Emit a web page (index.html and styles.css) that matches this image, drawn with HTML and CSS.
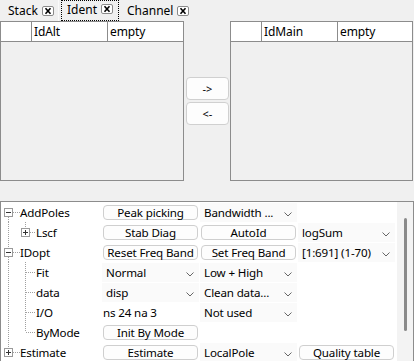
FILE: index.html
```html
<!DOCTYPE html>
<html>
<head>
<meta charset="utf-8">
<link rel="stylesheet" href="styles.css">
</head>
<body>
<div class="tabs">
  <div class="tab t1"><span>Stack</span><svg class="x" width="12" height="10" viewBox="0 0 12 10"><rect x="0.5" y="0.5" width="11" height="9" rx="1.5" fill="#fff" stroke="#8a8a8a"/><path d="M3.5 2.3 L8.5 7.7 M8.5 2.3 L3.5 7.7" stroke="#000" stroke-width="1.6"/></svg></div>
  <div class="tab t2 sel"><span>Ident</span><svg class="x" width="12" height="10" viewBox="0 0 12 10"><rect x="0.5" y="0.5" width="11" height="9" rx="1.5" fill="#fff" stroke="#8a8a8a"/><path d="M3.5 2.3 L8.5 7.7 M8.5 2.3 L3.5 7.7" stroke="#000" stroke-width="1.6"/></svg></div>
  <div class="tab t3"><span>Channel</span><svg class="x" width="12" height="10" viewBox="0 0 12 10"><rect x="0.5" y="0.5" width="11" height="9" rx="1.5" fill="#fff" stroke="#8a8a8a"/><path d="M3.5 2.3 L8.5 7.7 M8.5 2.3 L3.5 7.7" stroke="#000" stroke-width="1.6"/></svg></div>
</div>

<div class="top">
  <div class="list left">
    <div class="hdr"><div class="c0"></div><div class="c1">IdAlt</div><div class="c2">empty</div></div>
  </div>
  <div class="mid">
    <div class="mbtn">-&gt;</div>
    <div class="mbtn">&lt;-</div>
  </div>
  <div class="list right">
    <div class="hdr"><div class="c0"></div><div class="c1">IdMain</div><div class="c2">empty</div></div>
  </div>
</div>

<div class="panel">
  <div class="grid">
    <!-- AddPoles -->
    <div class="tree"><svg width="19" height="20" viewBox="0 0 19 20"><path class="dot" d="M7.5 15 V20 M12 10.5 H19"/><rect class="box" x="3.5" y="6.5" width="8" height="8"/><path class="sign" d="M5 10.5 H10"/></svg><span>AddPoles</span></div>
    <div class="cell"><div class="btn">Peak picking</div></div>
    <div class="cell"><div class="combo"><span>Bandwidth ...</span><svg class="chev" width="8" height="5" viewBox="0 0 8 5"><path d="M0.5 0.5 L4 4 L7.5 0.5" fill="none" stroke="#666"/></svg></div></div>
    <div class="cell"></div>

    <!-- Lscf -->
    <div class="tree"><svg width="35" height="20" viewBox="0 0 35 20"><path class="dot" d="M7.5 0 V20 M24.5 0 V6 M29 10.5 H35"/><rect class="box" x="20.5" y="6.5" width="8" height="8"/><path class="sign" d="M22 10.5 H27 M24.5 8 V13"/></svg><span>Lscf</span></div>
    <div class="cell"><div class="btn">Stab Diag</div></div>
    <div class="cell"><div class="btn">AutoId</div></div>
    <div class="cell"><div class="combo"><span>logSum</span><svg class="chev" width="8" height="5" viewBox="0 0 8 5"><path d="M0.5 0.5 L4 4 L7.5 0.5" fill="none" stroke="#666"/></svg></div></div>

    <!-- IDopt -->
    <div class="tree"><svg width="19" height="20" viewBox="0 0 19 20"><path class="dot" d="M7.5 0 V6 M7.5 15 V20 M12 10.5 H19"/><rect class="box" x="3.5" y="6.5" width="8" height="8"/><path class="sign" d="M5 10.5 H10"/></svg><span>IDopt</span></div>
    <div class="cell"><div class="btn">Reset Freq Band</div></div>
    <div class="cell"><div class="btn">Set Freq Band</div></div>
    <div class="cell"><div class="combo"><span>[1:691] (1-70)</span><svg class="chev" width="8" height="5" viewBox="0 0 8 5"><path d="M0.5 0.5 L4 4 L7.5 0.5" fill="none" stroke="#666"/></svg></div></div>

    <!-- Fit -->
    <div class="tree"><svg width="35" height="20" viewBox="0 0 35 20"><path class="dot" d="M7.5 0 V20 M24.5 0 V20 M25 10.5 H35"/></svg><span>Fit</span></div>
    <div class="cell"><div class="combo"><span>Normal</span><svg class="chev" width="8" height="5" viewBox="0 0 8 5"><path d="M0.5 0.5 L4 4 L7.5 0.5" fill="none" stroke="#666"/></svg></div></div>
    <div class="cell"><div class="combo"><span>Low + High</span><svg class="chev" width="8" height="5" viewBox="0 0 8 5"><path d="M0.5 0.5 L4 4 L7.5 0.5" fill="none" stroke="#666"/></svg></div></div>
    <div class="cell"></div>

    <!-- data -->
    <div class="tree"><svg width="35" height="20" viewBox="0 0 35 20"><path class="dot" d="M7.5 0 V20 M24.5 0 V20 M25 10.5 H35"/></svg><span>data</span></div>
    <div class="cell"><div class="combo"><span>disp</span><svg class="chev" width="8" height="5" viewBox="0 0 8 5"><path d="M0.5 0.5 L4 4 L7.5 0.5" fill="none" stroke="#666"/></svg></div></div>
    <div class="cell"><div class="combo"><span>Clean data...</span><svg class="chev" width="8" height="5" viewBox="0 0 8 5"><path d="M0.5 0.5 L4 4 L7.5 0.5" fill="none" stroke="#666"/></svg></div></div>
    <div class="cell"></div>

    <!-- I/O -->
    <div class="tree"><svg width="35" height="20" viewBox="0 0 35 20"><path class="dot" d="M7.5 0 V20 M24.5 0 V20 M25 10.5 H35"/></svg><span>I/O</span></div>
    <div class="cell"><div class="text">ns 24 na 3</div></div>
    <div class="cell"><div class="combo"><span>Not used</span><svg class="chev" width="8" height="5" viewBox="0 0 8 5"><path d="M0.5 0.5 L4 4 L7.5 0.5" fill="none" stroke="#666"/></svg></div></div>
    <div class="cell"></div>

    <!-- ByMode -->
    <div class="tree"><svg width="35" height="20" viewBox="0 0 35 20"><path class="dot" d="M7.5 0 V20 M24.5 0 V10 M25 10.5 H35"/></svg><span>ByMode</span></div>
    <div class="cell"><div class="btn">Init By Mode</div></div>
    <div class="cell"></div>
    <div class="cell"></div>

    <!-- Estimate -->
    <div class="tree"><svg width="19" height="20" viewBox="0 0 19 20"><path class="dot" d="M7.5 0 V6 M12 10.5 H19"/><rect class="box" x="3.5" y="6.5" width="8" height="8"/><path class="sign" d="M5 10.5 H10 M7.5 8 V13"/></svg><span>Estimate</span></div>
    <div class="cell"><div class="btn">Estimate</div></div>
    <div class="cell"><div class="combo"><span>LocalPole</span><svg class="chev" width="8" height="5" viewBox="0 0 8 5"><path d="M0.5 0.5 L4 4 L7.5 0.5" fill="none" stroke="#666"/></svg></div></div>
    <div class="cell"><div class="btn">Quality table</div></div>
  </div>
  <div class="scroll"><div class="thumb"></div></div>
</div>
</body>
</html>
```

FILE: styles.css
```css
html, body {
  margin: 0;
  padding: 0;
}
body {
  width: 414px;
  height: 361px;
  overflow: hidden;
  background: #f0f0f0;
  font-family: "Segoe UI", "Noto Sans", sans-serif;
  font-size: 11.6px;
  letter-spacing: -0.15px;
  color: #000;
}

/* tabs */
.tabs {
  display: flex;
  height: 21px;
  padding-left: 2px;
  box-sizing: border-box;
  font-size: 12px;
  letter-spacing: 0;
}
.tab {
  display: flex;
  align-items: center;
  height: 21px;
  box-sizing: border-box;
  padding-left: 6px;
  gap: 4px;
  line-height: 14px;
}
.tab .x { flex: none; }
.t1 { width: 57px; border-right: 1px solid #fafafa; }
.t2 {
  width: 58px;
  margin-left: 2px;
  padding-left: 5px;
  align-items: flex-start;
  padding-top: 2px;
  border: 1px dotted #000;
  height: 21px;
}
.t2 .x { margin-top: 1px; }
.t3 { width: 72px; margin-left: 2px; padding-left: 6px; }

/* top lists */
.top {
  display: flex;
  height: 160px;
  margin-bottom: 20px;
}
.list {
  box-sizing: border-box;
  border: 1px solid #8c8c8c;
  background: #f0f0f0;
}
.list.left { width: 184px; }
.list.right { width: 183px; }
.hdr {
  display: flex;
  height: 20px;
  box-sizing: border-box;
  border-bottom: 1px solid #8c8c8c;
  background: #fff;
  font-size: 12px;
  letter-spacing: -0.1px;
}
.hdr > div {
  box-sizing: border-box;
  line-height: 19px;
  padding-left: 2px;
}
.hdr .c0 { width: 31px; border-right: 1px solid #8c8c8c; }
.hdr .c1 { width: 76px; border-right: 1px solid #8c8c8c; }
.hdr .c2 { flex: 1; }

.mid {
  width: 46px;
  box-sizing: border-box;
  padding: 56px 0 0 2px;
  display: flex;
  flex-direction: column;
  gap: 2px;
}
.mbtn {
  width: 43px;
  height: 23px;
  box-sizing: border-box;
  border: 1px solid #d0d0d0;
  border-radius: 4px;
  background: #fdfdfd;
  display: flex;
  align-items: center;
  justify-content: center;
  font-size: 11px;
  letter-spacing: 0;
}

/* bottom panel */
.panel {
  display: flex;
  width: 414px;
  height: 170px;
  box-sizing: border-box;
  border: 1px solid #8c8c8c;
  background: #fff;
}
.grid {
  display: grid;
  grid-template-columns: 100px 98px 98px 98px;
  grid-auto-rows: 20px;
  width: 396px;
  align-content: start;
}
.tree {
  display: flex;
  align-items: center;
  white-space: nowrap;
}
.tree svg { flex: none; display: block; }
.dot {
  fill: none;
  stroke: #a0a0a0;
  stroke-width: 1;
  stroke-dasharray: 1 1;
}
.box {
  fill: #fff;
  stroke: #9a9a9a;
}
.sign {
  fill: none;
  stroke: #333;
}
.cell {
  display: flex;
  align-items: flex-start;
  padding-top: 3px;
  box-sizing: border-box;
}
.btn {
  margin-left: 2px;
  width: 95px;
  height: 15px;
  box-sizing: border-box;
  border: 1px solid #cfcfcf;
  border-radius: 4px;
  background: #fdfdfd;
  display: flex;
  align-items: center;
  justify-content: center;
  white-space: nowrap;
}
.combo {
  margin-left: 1px;
  margin-top: -2px;
  width: 97px;
  height: 19px;
  box-sizing: border-box;
  padding: 0 5px 0 4px;
  background: #fafafa;
  display: flex;
  align-items: center;
  justify-content: space-between;
  white-space: nowrap;
}
.chev { flex: none; margin-top: 3px; }
.text {
  margin-left: 2px;
  margin-top: -2px;
  line-height: 19px;
  white-space: nowrap;
}
.scroll {
  width: 16px;
  background: #f3f3f3;
  margin-left: 0;
  padding: 16px 0 0 7px;
  box-sizing: border-box;
}
.thumb {
  width: 3px;
  height: 113px;
  background: #8a8a8a;
  border-radius: 2px;
}
```
